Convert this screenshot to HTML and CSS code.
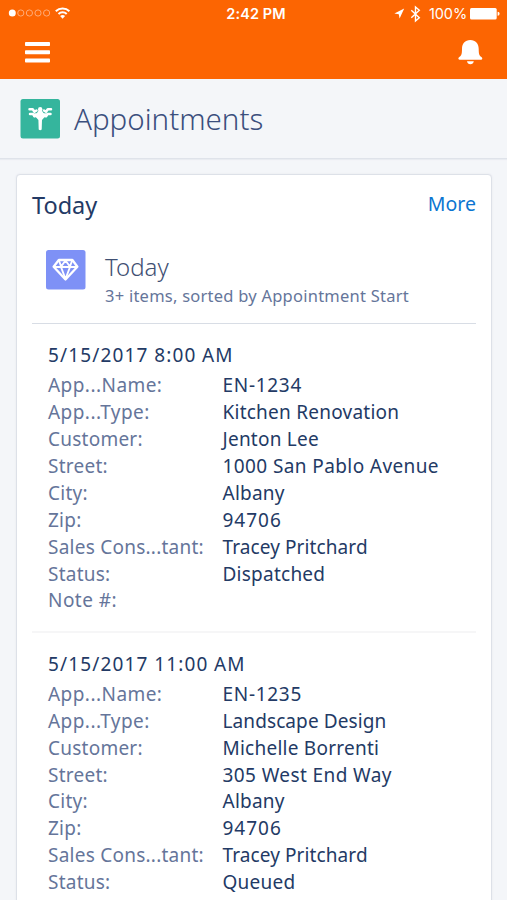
FILE: index.html
```html
<!DOCTYPE html>
<html lang="en">
<head>
<meta charset="utf-8">
<meta name="viewport" content="width=device-width">
<title>Appointments</title>
<link rel="stylesheet" href="styles.css">
</head>
<body>
<header class="topbar">
  <div class="status">
    <div class="status-left">
      <svg width="72" height="16" viewBox="0 0 72 16" fill="none" stroke="#ffab78">
        <circle cx="12.3" cy="8" r="3.5" fill="#fff" stroke="none"/>
        <circle cx="20.8" cy="8" r="3.1"/><circle cx="29.4" cy="8" r="3.1"/><circle cx="38" cy="8" r="3.1"/><circle cx="46.6" cy="8" r="3.1"/>
        <g stroke="#fff" stroke-width="2"><path d="M55.8 6.200a9.700 9.700 0 0 1 13.600 0M58.500 9a5.800 5.800 0 0 1 8.200 0"/></g>
        <path d="M60.100 11.100a3.600 3.600 0 0 1 5 0l-2.500 2.600z" fill="#fff" stroke="none"/>
      </svg>
    </div>
    <span class="clock">2:42 PM</span>
    <div class="status-right">
      <svg width="30" height="18" viewBox="0 0 30 18">
        <path d="M10.200 3.500 5.600 13.500 4.800 9.300.4 8.400z" fill="#fff"/>
        <path d="m17.300 5.200 8 7.600-3.800 3.200V2l3.800 3.300-8 7.500" fill="none" stroke="#fff" stroke-width="1.400"/>
      </svg>
      <span class="percent">100%</span>
      <svg class="battery" width="30" height="12" viewBox="0 0 30 12" fill="#fff"><rect width="26.700" height="11.400" rx="1.500"/><path d="M27.600 3.800q2 .2 2 2t-2 2z"/></svg>
    </div>
  </div>
  <div class="nav">
    <svg width="25" height="21" viewBox="0 0 25 21" fill="#fff"><rect width="25" height="4" rx=".8"/><rect y="8.300" width="25" height="4" rx=".8"/><rect y="16.600" width="25" height="4" rx=".8"/></svg>
    <svg width="25" height="25" viewBox="0 0 25 25" fill="#fff"><path d="M12.300 0C7 0 4 3.700 4 8.700c0 5.400-.7 7-2.700 8.400C0 18 0 19.700 1.500 19.700h21.800c1.400 0 1.300-1.700.1-2.600-2-1.400-2.700-3-2.700-8.400C20.700 3.700 17.600 0 12.300 0zM9 21.200h6.800c-.3 1.900-1.600 3-3.400 3s-3.100-1.100-3.400-3z"/></svg>
  </div>
</header>
<section class="page-head">
  <svg width="40" height="40" viewBox="0 0 40 40">
    <rect x=".5" width="39.500" height="39.500" rx="2.500" fill="#35b59d"/>
    <g fill="none" stroke="#fff" stroke-width="2.500" stroke-linecap="round" stroke-linejoin="round">
      <path d="M9.500 10.200h3.200l1.800 2.600 2-1.300M10 15h3l1.500 2.300M31 10.200h-3.200L26 12.800l-2-1.300M30.500 15h-3L26 17.300"/>
      <path d="M15 16.200h10.500" stroke-width="4"/>
    </g>
    <circle cx="20.200" cy="10.300" r="2.200" fill="#fff"/>
    <path d="M19 11h2.500l4 6-3.500 4-.3 9.500q-1.500 1.500-3 0l-.3-9.500-3.500-4z" fill="#fff"/>
  </svg>
  <h1>Appointments</h1>
</section>
<main class="card">
  <div class="card-head"><h2>Today</h2><a class="more">More</a></div>
  <div class="list-head">
    <svg width="40" height="40" viewBox="0 0 40 40">
      <rect width="39.500" height="39.500" rx="2.500" fill="#7e91f6"/>
      <g fill="none" stroke="#fff" stroke-linejoin="round">
        <path d="M12.800 10h13.600l5 6.800-11.900 12.700L7.600 16.800z" stroke-width="2.300"/>
        <path d="M8 17h23M12.800 10l2.300 6.500 4.400-6 4.400 6 2.500-6.500M15 17l4.500 12L24 17" stroke-width="1.900"/>
      </g>
    </svg>
    <div><h3>Today</h3><p>3+ items, sorted by Appointment Start</p></div>
  </div>
  <article class="item">
    <h4>5/15/2017 8:00 AM</h4>
    <dl>
      <dt class="cut">App...Name:</dt><dd class="num">EN-1234</dd>
      <dt class="cut">App...Type:</dt><dd>Kitchen Renovation</dd>
      <dt>Customer:</dt><dd>Jenton Lee</dd>
      <dt>Street:</dt><dd class="address">1000 San Pablo Avenue</dd>
      <dt>City:</dt><dd>Albany</dd>
      <dt>Zip:</dt><dd class="num zip">94706</dd>
      <dt>Sales Cons...tant:</dt><dd class="person">Tracey Pritchard</dd>
      <dt>Status:</dt><dd>Dispatched</dd>
      <dt class="cut">Note #:</dt><dd></dd>
    </dl>
  </article>
  <article class="item">
    <h4>5/15/2017 11:00 AM</h4>
    <dl>
      <dt class="cut">App...Name:</dt><dd class="num">EN-1235</dd>
      <dt class="cut">App...Type:</dt><dd class="person">Landscape Design</dd>
      <dt>Customer:</dt><dd>Michelle Borrenti</dd>
      <dt>Street:</dt><dd class="address">305 West End Way</dd>
      <dt>City:</dt><dd>Albany</dd>
      <dt>Zip:</dt><dd class="num zip">94706</dd>
      <dt>Sales Cons...tant:</dt><dd class="person">Tracey Pritchard</dd>
      <dt>Status:</dt><dd>Queued</dd>
    </dl>
  </article>
</main>
</body>
</html>
```
FILE: styles.css
```css
* { box-sizing: border-box; margin: 0; padding: 0; }
html { height: 900px; overflow: hidden; }
body { height: 900px; overflow: hidden; background: #f4f6f9; color: #233a65; font-family: "Noto Sans", "Open Sans", sans-serif; }
svg { display: block; flex: none; }
h1, h2, h3, h4 { font-weight: 400; white-space: nowrap; }
.topbar { height: 79px; background: #fc6502; color: #fff; }
.status { height: 27px; display: grid; grid-template-columns: 1fr auto 1fr; align-items: center; font-family: Inter, sans-serif; }
.status-left { padding-bottom: 1px; }
.clock { font-size: 14.5px; font-weight: 600; letter-spacing: .1px; padding-left: 5px; }
.status-right { display: flex; justify-content: flex-end; align-items: center; padding-right: 7px; }
.percent { font-size: 14.5px; width: 37px; margin-left: 5px; letter-spacing: -.1px; }
.battery { margin-left: 4px; }
.nav { height: 50px; display: flex; justify-content: space-between; align-items: center; padding: 0 24px 0 25px; }
.page-head { height: 80px; border-bottom: 1px solid #dfe3ea; box-shadow: 0 1px 1px #e9ecf1; display: flex; align-items: center; padding: 0 20px; gap: 14px; }
h1 { font-size: 29.5px; font-weight: 300; line-height: 40px; color: #3b4f7d; }
.card { margin: 15px 15px 0 16px; height: 760px; background: #fff; border: 1px solid #dde1e8; border-radius: 4px; padding: 1px 15px 0; box-shadow: 0 0 2px #e3e6ec; }
.card-head { height: 74px; display: flex; justify-content: space-between; }
h2 { font-size: 23.5px; line-height: 30px; margin-top: 14px; }
.more { font-size: 19.5px; line-height: 26px; margin-top: 15px; color: #0b75d1; }
.list-head { height: 74px; padding: 0 14px; display: flex; gap: 19px; border-bottom: 1px solid #d8dde5; }
h3 { font-size: 24px; line-height: 34px; font-weight: 300; color: #3f5073; }
.list-head p { font-size: 16.5px; letter-spacing: .24px; line-height: 24px; color: #65759a; white-space: nowrap; }
.item { height: 308.5px; padding: 16px 16px 0; border-bottom: 2px solid #f6f6f7; }
h4 { font-size: 19px; letter-spacing: 1.15px; word-spacing: -.5px; line-height: 30px; }
dl { display: grid; grid-template-columns: 174.5px 1fr; grid-auto-rows: 26.88px; line-height: 26.88px; font-size: 19px; letter-spacing: .24px; white-space: nowrap; padding-top: 2.4px; }
dt { color: #65759a; }
.cut { letter-spacing: .45px; }
.num { letter-spacing: .7px; }
.zip { letter-spacing: 1px; }
.person { letter-spacing: .1px; }
.address { letter-spacing: .4px; }
```
